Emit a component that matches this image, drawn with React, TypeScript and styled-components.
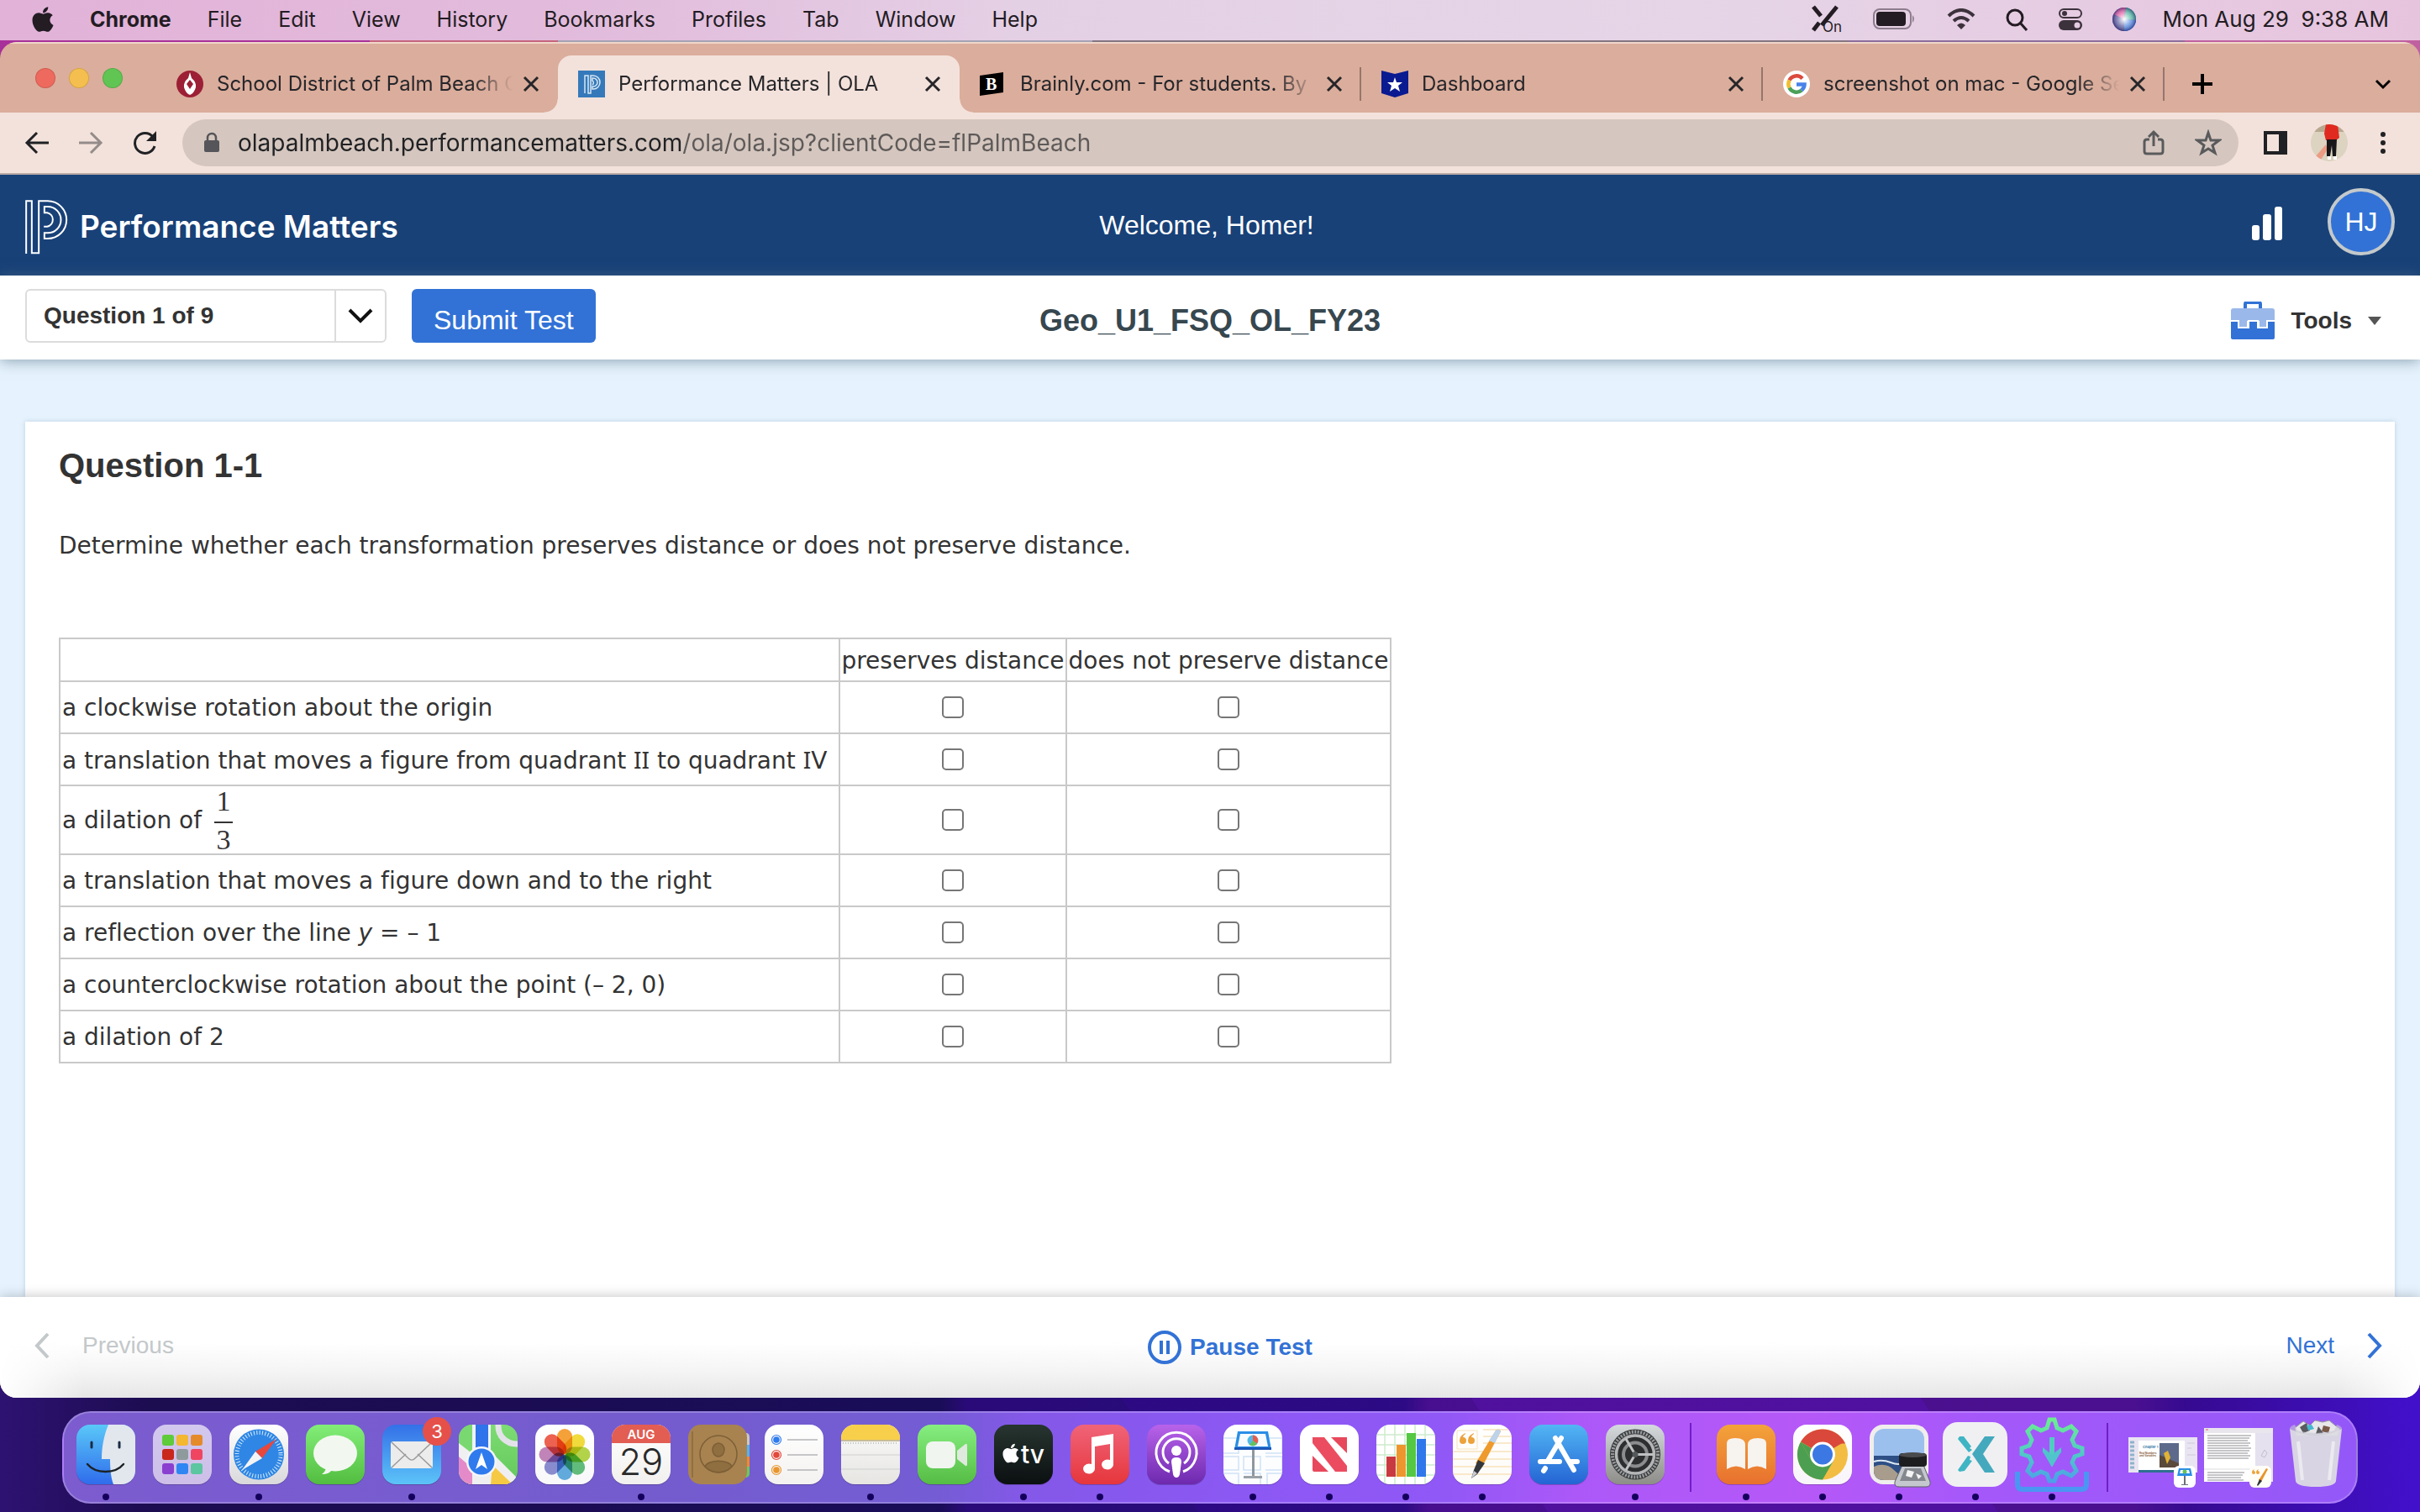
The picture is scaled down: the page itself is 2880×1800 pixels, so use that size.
import React, { useState } from "react";
import styled, { createGlobalStyle, css } from "styled-components";
import { FaApple } from "react-icons/fa";

const ui = `Inter, "Liberation Sans", sans-serif`;
const arial = `"Liberation Sans", Arial, sans-serif`;
const verdana = `"DejaVu Sans", Verdana, sans-serif`;
const blue = "#3272d6";

const GlobalStyle = createGlobalStyle`
  *, *::before, *::after { box-sizing: border-box; }
  body { margin: 0; background: #2a0d80; }
  button { border: 0; padding: 0; margin: 0; background: none; color: inherit; font: inherit; cursor: pointer; }
  svg { display: block; flex: none; }
`;

const Desktop = styled.div`
  min-height: 100vh;
  display: flex;
  flex-direction: column;
  background:
    linear-gradient(90deg, #a8309a 0 440px, #c4647c 440px 664px, #a4a2b4 664px 1300px, #847480 1300px 2200px, #8c6c9c 2200px 2600px, #c060a0 2600px) top / 100% 90px no-repeat,
    linear-gradient(56deg, transparent 0 48%, #3d08a833 48% 62%, #5c12c455 62% 80%, transparent 80%) bottom / 100% 136px no-repeat,
    linear-gradient(90deg, #2e1272 0, #1c0c50 180px, #1a0d58 1120px, #2a0a78 1150px, #280b7c 1670px, #4a108a 1700px, #4a1090 2540px, #360a90 2600px, #4210cc 100%);
`;

/* ---------- menu bar ---------- */
const MenuBar = styled.header`
  height: 48px;
  display: flex;
  align-items: center;
  justify-content: space-between;
  padding: 0 37px 2px 38px;
  background: linear-gradient(90deg, #e2b2d8 0, #e2bcdc 25%, #e4d0e5 42%, #e5d5e7 70%, #e7c4de 100%);
  font: 400 25px/46px ${ui};
  color: #231c23;
`;
const Menus = styled.nav`
  display: flex;
  align-items: center;
  gap: 43px;
`;
const AppleMenu = styled.button`
  width: 26px;
  display: flex;
  justify-content: center;
`;
const MenuItem = styled.button<{ $app?: boolean }>`
  font-weight: ${(p) => (p.$app ? 700 : 400)};
`;
const Status = styled.div`
  display: flex;
  align-items: center;
  gap: 36px;
`;
const Clock = styled.time`
  margin-left: -4px;
  font-size: 26px;
  white-space: pre;
`;

/* ---------- browser ---------- */
const Browser = styled.div`
  flex: 1;
  display: flex;
  flex-direction: column;
  margin-top: 2px;
  border-radius: 20px;
  overflow: hidden;
  background: #dbad9c;
`;
const TabStrip = styled.div`
  height: 84px;
  display: flex;
  align-items: flex-end;
  padding-right: 32px;
  border-top: 2px solid #f0d6ca;
`;
const Lights = styled.div`
  display: flex;
  gap: 16px;
  padding: 0 40px 29px 42px;
`;
const Light = styled.button<{ $c: string }>`
  width: 24px;
  height: 24px;
  border-radius: 50%;
  background: ${(p) => p.$c};
  box-shadow: inset 0 0 0 1px #0002;
`;
const Tabs = styled.div`
  flex: 1;
  display: flex;
`;
const flare = css`
  content: "";
  position: absolute;
  bottom: 0;
  width: 16px;
  height: 16px;
`;
const Tab = styled.div<{ $active?: boolean; $divided?: boolean }>`
  position: relative;
  flex: 0 1 478px;
  min-width: 0;
  height: 68px;
  display: flex;
  align-items: center;
  padding: 0 22px 0 24px;
  font: 400 24px/68px ${ui};
  color: #26262a;
  ${(p) =>
    p.$active &&
    css`
      background: #f3e2db;
      border-radius: 16px 16px 0 0;
      &::before { ${flare} left: -16px; background: radial-gradient(circle at 0 0, #dbad9c 15px, #f3e2db 16px); }
      &::after { ${flare} right: -16px; background: radial-gradient(circle at 100% 0, #dbad9c 15px, #f3e2db 16px); }
    `}
  ${(p) =>
    p.$divided &&
    css`
      &::after { content: ""; position: absolute; right: 0; top: 14px; width: 2px; height: 40px; background: #96766c; }
    `}
`;
const TabTitle = styled.button`
  flex: 1;
  min-width: 0;
  margin: 0 12px 0 16px;
  text-align: left;
  white-space: nowrap;
  overflow: hidden;
  mask-image: linear-gradient(90deg, #000 calc(100% - 48px), transparent);
`;
const StripButton = styled.button`
  height: 68px;
  display: flex;
  align-items: center;
`;
const AddressRow = styled.div`
  height: 74px;
  display: flex;
  align-items: center;
  background: #f3e2db;
  border-bottom: 2px solid #b9aaa6;
  padding: 0 30px 0 26px;
  color: #202124;
`;
const NavButtons = styled.div`
  display: flex;
  gap: 28px;
  margin-right: 27px;
`;
const Omnibox = styled.div`
  flex: 1;
  height: 56px;
  display: flex;
  align-items: center;
  gap: 20px;
  padding: 0 20px 0 24px;
  border-radius: 28px;
  background: #d5c7bf;
  color: #5a5a5c;
`;
const Url = styled.input`
  flex: 1;
  min-width: 0;
  height: 56px;
  border: 0;
  padding: 0;
  outline: 0;
  font: 400 28px/56px ${ui};
  color: transparent;
  background: linear-gradient(90deg, #202124 528px, #5e5a59 528px);
  -webkit-background-clip: text;
  background-clip: text;
`;
const BoxActions = styled.div`
  display: flex;
  gap: 34px;
`;
const Extras = styled.div`
  display: flex;
  align-items: center;
  gap: 28px;
  padding-left: 30px;
`;

/* ---------- Performance Matters ---------- */
const AppHeader = styled.header`
  height: 120px;
  display: grid;
  grid-template-columns: 1fr auto 1fr;
  align-items: center;
  padding: 0 30px;
  background: #184178;
  color: #fff;
`;
const Brand = styled.div`
  display: flex;
  align-items: center;
  gap: 14px;
  padding-top: 4px;
  font: 600 37px/44px ${ui};
`;
const Welcome = styled.div`
  margin-right: 8px;
  font: 400 32px/40px ${arial};
`;
const HeaderRight = styled.div`
  display: flex;
  justify-content: flex-end;
  align-items: center;
  gap: 54px;
  padding-bottom: 8px;
`;
const Progress = styled.button`
  padding-top: 4px;
`;
const Avatar = styled.button`
  width: 80px;
  height: 80px;
  border-radius: 50%;
  border: 4px solid #c4c9cb;
  background: ${blue};
  font: 400 32px/40px ${arial};
`;
const TestBar = styled.div`
  position: relative;
  z-index: 1;
  height: 100px;
  display: grid;
  grid-template-columns: 1fr auto 1fr;
  align-items: start;
  padding: 16px 30px 0;
  background: #fff;
  box-shadow: 0 2px 16px #5a7486a0;
`;
const BarLeft = styled.div`
  display: flex;
  gap: 30px;
`;
const Picker = styled.div`
  width: 430px;
  height: 64px;
  display: grid;
  grid-template-columns: 1fr 60px;
  align-items: center;
  border: 2px solid #dcdcdc;
  border-radius: 6px;
  & > * { grid-row: 1; }
`;
const PickerSelect = styled.select`
  grid-column: 1 / 3;
  height: 60px;
  appearance: none;
  border: 0;
  background: none;
  padding: 0 20px;
  font: 700 28px/60px ${arial};
  color: #333;
`;
const PickerArrow = styled.span`
  grid-column: 2;
  height: 60px;
  display: flex;
  align-items: center;
  justify-content: center;
  border-left: 2px solid #dcdcdc;
  pointer-events: none;
`;
const Submit = styled.button`
  height: 64px;
  padding: 10px 26px 0;
  border-radius: 6px;
  background: ${blue};
  color: #fff;
  font: 400 32px/54px ${arial};
`;
const TestTitle = styled.h1`
  margin: 0;
  font: 700 36px/76px ${arial};
  color: #37474f;
`;
const Tools = styled.button`
  justify-self: end;
  display: flex;
  align-items: center;
  gap: 19px;
  padding-right: 16px;
  font: 700 28px/76px ${arial};
  color: #333;
`;
const Content = styled.main`
  flex: 1;
  display: flex;
  padding: 74px 30px 0;
  background: #e6f3fe;
`;
const Card = styled.section`
  flex: 1;
  padding: 28px 40px 40px;
  background: #fff;
  box-shadow: 0 0 6px #4a6a8a40;
  color: #333;
  font: 400 28px/36px ${verdana};
  font-variant-ligatures: none;
`;
const CardTitle = styled.h2`
  margin: 0;
  font: 700 40px/48px ${arial};
`;
const Prompt = styled.p`
  margin: 54px 0 91px;
`;
const Matrix = styled.table`
  border-collapse: collapse;
`;
const Row = styled.tr<{ $h: number }>`
  height: ${(p) => p.$h}px;
`;
const cell = css`
  border: 2px solid #c9c9c9;
  font-weight: 400;
  white-space: nowrap;
`;
const Head = styled.th<{ $w: number }>`
  ${cell}
  padding: 2px 1px 0;
  min-width: ${(p) => p.$w}px;
`;
const Label = styled.th`
  ${cell}
  padding: 2px 2px 0;
  text-align: left;
`;
const Choice = styled.td`
  ${cell}
  padding: 0;
  text-align: center;
`;
const Check = styled.input`
  appearance: none;
  display: block;
  width: 26px;
  height: 26px;
  margin: 0 auto;
  border: 2px solid #767676;
  border-radius: 5px;
  background: #fff;
  &:checked { background: ${blue}; }
`;
const Roman = styled.span`
  font-family: "Noto Sans", ${verdana};
`;
const WithFraction = styled.span`
  display: flex;
  align-items: center;
  gap: 15px;
`;
const Fraction = styled.span`
  display: flex;
  flex-direction: column;
  align-items: center;
  width: 22px;
  font: 400 34px/32px "Liberation Serif", "Times New Roman", serif;
`;
const Over = styled.span`
  width: 22px;
  padding-bottom: 8px;
  margin-bottom: 4px;
  border-bottom: 2px solid #333;
  text-align: center;
`;
const Footer = styled.footer`
  position: relative;
  height: 120px;
  display: grid;
  grid-template-columns: 1fr auto 1fr;
  align-items: center;
  padding: 0 44px 4px 40px;
  background:
    linear-gradient(90deg, #fff, #fff0 100px, #fff0 calc(100% - 100px), #fff),
    linear-gradient(#fff 45%, #f4f4f4 75%, #e6e6e6);
  box-shadow: 0 0 14px #00000040;
`;
const Step = styled.button<{ $end?: boolean }>`
  justify-self: ${(p) => (p.$end ? "end" : "start")};
  display: flex;
  align-items: center;
  gap: 38px;
  font: 400 28px/36px ${arial};
  color: ${blue};
  &:disabled { color: #c3c8ca; }
`;
const Pause = styled.button`
  display: flex;
  align-items: center;
  gap: 10px;
  padding: 4px 0 0 52px;
  font: 700 28px/40px ${arial};
  color: ${blue};
`;

/* ---------- dock ---------- */
const DockArea = styled.div`
  display: flex;
  justify-content: center;
  padding: 16px 0 10px;
`;
const Dock = styled.nav`
  height: 110px;
  display: flex;
  align-items: flex-start;
  gap: 21px;
  padding: 14px 13px 0 15px;
  border: 2px solid #ffffff3a;
  border-radius: 34px;
  background: linear-gradient(90deg, #7c5ccf 0, #785cd0 12%, #745cce 24%, #745cd4 38%, #8458e8 42%, #8c58f4 52%, #9058f6 60%, #ac58f8 66%, #b658f8 76%, #a458fa 84%, #9458f8 100%);
`;
const DockItem = styled.button<{ $open?: boolean }>`
  position: relative;
  width: 70px;
  height: 71px;
  ${(p) =>
    p.$open &&
    css`
      &::after {
        content: "";
        position: absolute;
        left: 31px;
        top: 82px;
        width: 8px;
        height: 8px;
        border-radius: 50%;
        background: #14005c;
      }
    `}
`;
const Badge = styled.span`
  position: absolute;
  right: -12px;
  top: -9px;
  width: 34px;
  height: 34px;
  border-radius: 50%;
  background: #e5504a;
  color: #fff;
  font: 400 22px/34px ${ui};
  text-align: center;
`;
const DockRule = styled.span`
  width: 2px;
  height: 82px;
  margin: -2px 9px 0;
  background: #7020c8;
`;
const Art = styled.svg`
  width: 70px;
  height: 71px;
  overflow: visible;
`;

type TileProps = { id: string; from: string; to: string; children?: React.ReactNode };
const Tile = ({ id, from, to, children }: TileProps) => (
  <Art viewBox="0 0 70 71">
    <defs>
      <linearGradient id={id} x1="0" y1="0" x2="0" y2="1">
        <stop offset="0" stopColor={from} />
        <stop offset="1" stopColor={to} />
      </linearGradient>
      <clipPath id={id + "-clip"}>
        <rect width="70" height="71" rx="16" />
      </clipPath>
    </defs>
    <rect y="1" width="70" height="71" rx="16" fill="#0003" />
    <g clipPath={`url(#${id}-clip)`}>
      <rect width="70" height="71" fill={`url(#${id})`} />
      {children}
    </g>
  </Art>
);

const Finder = () => (
  <Tile id="finder" from="#5ac8f8" to="#2f6cec">
    <path d="M38 0C33 12 30 26 30 41h10c0 12 1 22 4 30h26V0z" fill="#e2e7ee" />
    <path d="M18 21v6M51 21v6" stroke="#1b2a44" strokeWidth="3" strokeLinecap="round" />
    <path d="M13 47c10 12 33 12 43 0" fill="none" stroke="#1b2226" strokeWidth="2.4" strokeLinecap="round" />
  </Tile>
);
const padColors = ["#5ecb3a", "#f3b730", "#e58a2a", "#c9261c", "#8f9a9c", "#ef4560", "#8a3fd0", "#2f86f2", "#5cc6a0"];
const Launchpad = () => (
  <Tile id="pad" from="#d2c8ee" to="#cdbfe8">
    {padColors.map((c, i) => (
      <rect key={c} x={11 + (i % 3) * 17} y={12 + Math.floor(i / 3) * 17} width="14" height="13" rx="3" fill={c} />
    ))}
  </Tile>
);
const Safari = () => (
  <Tile id="safari" from="#ffffff" to="#d9d9dc">
    <circle cx="35" cy="35.500" r="30" fill="#2f86e4" />
    <circle cx="35" cy="35.500" r="26" fill="none" stroke="#d6ecfb" strokeWidth="5" strokeDasharray="1 2.400" />
    <path d="M56 17L39 40l-8-8z" fill="#e8473c" />
    <path d="M15 54l24-14-8-8z" fill="#f4f4f6" />
  </Tile>
);
const Messages = () => (
  <Tile id="msg" from="#82ee78" to="#52bd40">
    <ellipse cx="35" cy="34" rx="26" ry="21.500" fill="#f2f8f0" />
    <path d="M24 50c0 4-2 7-5 9 6 0 10-2 12-5z" fill="#f2f8f0" />
  </Tile>
);
const Mail = () => (
  <Tile id="mail" from="#3470e8" to="#5cc4f8">
    <rect x="10" y="20" width="50" height="32" rx="3" fill="#ececec" />
    <path d="M11 51l17-16M59 51L42 35M11 21l20 19c3 3 5 3 8 0l20-19" fill="none" stroke="#9a9a9a" strokeWidth="1.500" />
  </Tile>
);
const Maps = () => (
  <Tile id="maps" from="#7ddc74" to="#63c85a">
    <path d="M0 0h17v44L0 26z" fill="#79d970" />
    <path d="M0 22l18 14v35H0z" fill="#f0f0f2" />
    <path d="M0 38l16 14v19H0z" fill="#e48ac8" />
    <path d="M38 32l32 32v7H18V50z" fill="#efeff1" />
    <path d="M40 48l24 23H38z" fill="#f6c944" />
    <path d="M16 0h22v60H16z" fill="#eef2f8" />
    <path d="M20 0h15v40H20z" fill="#2f74ea" />
    <circle cx="68" cy="2" r="21" fill="none" stroke="#e2e3e8" strokeWidth="7" />
    <circle cx="27" cy="44" r="18" fill="#f4f6fa" />
    <circle cx="27" cy="44" r="15.500" fill="#2f7bee" />
    <path d="M27 33l7 20-7-5-7 5z" fill="#fff" />
  </Tile>
);
const petals = ["#f6a23a", "#f3dc3c", "#b5d64a", "#63bf7c", "#64aee0", "#8c8ed2", "#c486ba", "#ee6250"];
const Photos = () => (
  <Tile id="photos" from="#ffffff" to="#f8f8fa">
    {petals.map((c, i) => (
      <rect
        key={c}
        x="26"
        y="5"
        width="18"
        height="30"
        rx="9"
        fill={c}
        style={{ mixBlendMode: "multiply" }}
        transform={`rotate(${i * 45} 35 35.500)`}
      />
    ))}
  </Tile>
);
const Calendar = () => (
  <Tile id="cal" from="#ffffff" to="#f1f0ee">
    <rect width="70" height="22" fill="#e25d52" />
    <text x="35" y="17" textAnchor="middle" fontFamily={ui} fontSize="15" fontWeight="600" fill="#fff">AUG</text>
    <text x="35" y="60" textAnchor="middle" fontFamily={ui} fontSize="43" fontWeight="300" fill="#2a2a2a">29</text>
  </Tile>
);
const Contacts = () => (
  <Art viewBox="0 0 70 71">
    <path d="M60 10h10q3 1 3 5v10H60z" fill="#c9c9c4" />
    <path d="M60 24h13v14H60z" fill="#54b4ea" />
    <path d="M60 38h13v12H60z" fill="#f08a2c" />
    <path d="M60 50h13v8q0 4-4 5h-9z" fill="#6cc95c" />
    <rect width="70" height="71" rx="15" fill="#a88350" />
    <path d="M5 8v55" stroke="#8a693c" strokeWidth="1.500" />
    <g fill="none" stroke="#7d5f36" strokeWidth="1.500">
      <circle cx="36" cy="35" r="22" />
      <ellipse cx="36" cy="30" rx="7" ry="8" fill="#8f6e40" />
      <path d="M20 50c3-9 29-9 32 0-9 9-23 9-32 0z" fill="#8f6e40" />
    </g>
  </Art>
);
const Reminders = () => (
  <Tile id="rem" from="#ffffff" to="#f4f2f0">
    {["#2f7bee", "#e2483c", "#e8962e"].map((c, i) => (
      <g key={c}>
        <circle cx="14" cy={18 + i * 18} r="5.500" fill="none" stroke={c} strokeWidth="1.200" />
        <circle cx="14" cy={18 + i * 18} r="3.800" fill={c} />
        <path d={`M27 ${18 + i * 18}h36`} stroke="#b4b4b8" strokeWidth="1.500" />
      </g>
    ))}
  </Tile>
);
const Notes = () => (
  <Tile id="notes" from="#fafafa" to="#e6e5e2">
    <rect width="70" height="18" fill="#f8cf4a" />
    <path d="M0 19h70" stroke="#b8a878" strokeWidth="1.500" />
    <path d="M2 22h66" stroke="#b4b4b4" strokeWidth="1.500" strokeDasharray="1 2" />
    <path d="M0 36h70M0 53h70" stroke="#cfcfcf" strokeWidth="1.200" />
  </Tile>
);
const FaceTime = () => (
  <Tile id="ft" from="#86ee80" to="#55bd44">
    <rect x="10" y="20" width="35" height="32" rx="8" fill="#f0f5ef" />
    <path d="M47 31l10-8q2-1 2 2v22q0 3-2 2l-10-8z" fill="#dfe9dd" />
  </Tile>
);
const AppleTv = () => (
  <Tile id="atv" from="#27352f" to="#0b0f11">
    <FaApple x="7" y="21" size={26} color="#fff" />
    <text x="32" y="46" fontFamily={ui} fontSize="30" fontWeight="500" fill="#fff">tv</text>
  </Tile>
);
const Music = () => (
  <Tile id="music" from="#f06478" to="#e6363c">
    <path d="M25 15l26-4v37a7 6 0 1 1-4-6V23l-18 3v27a7 6 0 1 1-4-6z" fill="#fff" />
  </Tile>
);
const Podcasts = () => (
  <Tile id="pod" from="#b863ea" to="#6d29ae">
    <g fill="none" stroke="#fff" strokeWidth="3">
      <path d="M27 56a24 24 0 1 1 16 0" />
      <path d="M26 46a16 16 0 1 1 18 0" />
    </g>
    <circle cx="35" cy="31" r="6" fill="#fff" />
    <path d="M29 44q0-5 6-5t6 5l-2 15q-1 4-4 4t-4-4z" fill="#fff" />
  </Tile>
);
const Keynote = () => (
  <Tile id="key" from="#ffffff" to="#fbfcff">
    <path d="M0 16h18v18H0M0 38h18v16H0M24 38h20v16H24zM50 38h20v16H50M50 16h20v18H50M24 58h20v14H24M0 58h18v14M52 72V58h18" fill="none" stroke="#cfe2f6" strokeWidth="1.500" />
    <path d="M34 28h3v34h-3z" fill="#8f979e" />
    <path d="M24 61h22v3H24z" fill="#9aa2a8" />
    <path d="M17 8h36l4 22H13z" fill="#2a8ee6" />
    <path d="M20 11h30l3 15H17z" fill="#f6fbff" />
    <path d="M13 27h44v3H13z" fill="#1c57b8" />
    <circle cx="35" cy="19" r="6.500" fill="#52b8e8" />
    <path d="M35 19v-6.500a6.500 6.500 0 0 1 5 10z" fill="#ee5a48" />
    <path d="M35 19l5 4a6.500 6.500 0 0 1-9 1z" fill="#63c35a" />
  </Tile>
);
const News = () => (
  <Tile id="news" from="#ffffff" to="#ffffff">
    <path d="M15 15h14l27 34v7H42L15 22z" fill="#ec4c60" />
    <path d="M37 15h19v19zM15 37l19 19H17q-2 0-2-2z" fill="#e8485c" />
  </Tile>
);
const Numbers = () => (
  <Tile id="num" from="#ffffff" to="#ffffff">
    <path d="M0 12h70M0 24h70M0 36h70M0 48h70M0 60h70M10 0v71M22 0v71M34 0v71M46 0v71M58 0v71" stroke="#cdeccb" strokeWidth="1.500" />
    <rect x="12" y="38" width="11" height="24" fill="#c93a40" />
    <rect x="24" y="24" width="11" height="38" fill="#ee962e" />
    <rect x="36" y="10" width="11" height="52" fill="#55c843" />
    <rect x="48" y="17" width="11" height="45" fill="#2f78ec" />
  </Tile>
);
const Pages = () => (
  <Tile id="pages" from="#ffffff" to="#fdfbf7">
    <path d="M36 6h34M36 14h34M36 22h34M0 32h70M0 41h70M0 50h70M0 59h70" stroke="#f8e2bc" strokeWidth="1.500" />
    <path d="M5 7h24v22H5z" fill="none" stroke="#f8e2bc" />
    <path d="M15 10q-7 3-7 9a4 4 0 1 0 4-4q0-2 3-4zM25 10q-7 3-7 9a4 4 0 1 0 4-4q0-2 3-4z" fill="#eda23c" />
    <path d="M51 7q4-3 6 1L35 50l-8-4z" fill="#ee9a2c" />
    <path d="M51 7q4-3 6 1l-7 14-7-3z" fill="#bcd3ea" />
    <path d="M30 42l8 4-9 13-7 5 3-10z" fill="#33363a" />
    <path d="M22 64l3-9 4 3z" fill="#c8ccd2" />
  </Tile>
);
const AppStore = () => (
  <Tile id="store" from="#52b6f4" to="#2464d4">
    <g stroke="#fff" strokeWidth="6" strokeLinecap="round">
      <path d="M38 16L22 43M31 16l22 38M13 44h23M48 44h9M19 52l-2 3" />
    </g>
  </Tile>
);
const Settings = () => (
  <Tile id="sys" from="#d5dade" to="#8d8d88">
    <circle cx="35" cy="35.500" r="30" fill="#37393a" />
    <circle cx="35" cy="35.500" r="27" fill="none" stroke="#9a9d9f" strokeWidth="4" strokeDasharray="2 1.500" />
    <circle cx="35" cy="35.500" r="22.500" fill="#2c2e2f" stroke="#b4b6b8" strokeWidth="3.500" />
    <circle cx="35" cy="35.500" r="14" fill="none" stroke="#8a8c8d" strokeWidth="4" />
    <path d="M35 35.500h22M35 35.500L24 17M35 35.500L24 54" stroke="#bfc1c2" strokeWidth="3" />
    <circle cx="35" cy="35.500" r="3.500" fill="#55585a" />
  </Tile>
);
const Books = () => (
  <Tile id="books" from="#f3a33a" to="#e8702e">
    <path d="M12 53V22q0-6 10-6 12 0 12 8v29q-11-7-22 0zM59 53V22q0-6-10-6-12 0-12 8v29q11-7 22 0z" fill="#f7f3ef" />
  </Tile>
);
const ChromeIcon = () => (
  <Tile id="chrome" from="#ffffff" to="#f8f4fa">
    <circle cx="35" cy="35.500" r="30" fill="#f2bd42" />
    <path d="M35 35.500L9 20.500a30 30 0 0 1 52 0z" fill="#d9483b" />
    <path d="M35 20.500h26a30 30 0 0 1 1 2H35z" fill="#d9483b" />
    <path d="M9 20.500a30 30 0 0 0 26 45l13-22.500-26 0z" fill="#4c9f50" />
    <path d="M9 20.500L22 43l13-7z" fill="#4c9f50" />
    <circle cx="35" cy="35.500" r="15" fill="#fff" />
    <circle cx="35" cy="35.500" r="12" fill="#3b78e4" />
  </Tile>
);
const Preview = () => (
  <Art viewBox="0 0 70 71">
    <rect width="70" height="71" rx="16" fill="#f0eeec" />
    <rect x="5" y="5" width="60" height="61" rx="12" fill="#9cc0ee" />
    <path d="M5 37h60v17q0 12-12 12H17Q5 66 5 54z" fill="#2d4f86" />
    <path d="M5 50q14-6 24 4t18 12H17Q5 66 5 54z" fill="#a89c8c" />
    <path d="M5 44q10-3 20 1t16 0" fill="none" stroke="#dce8f4" strokeWidth="2" />
    <path d="M39 48h25l8 20q1 6-5 6H35q-6 0-5-6z" fill="#c4c8ce" stroke="#5c5e64" />
    <path d="M42 52h19l6 15H36z" fill="#84888e" />
    <path d="M45 54l8 2-3 7-7-2zM55 58l7 3-4 4z" fill="#f4f4f4" />
    <rect x="35" y="34" width="33" height="16" rx="4" fill="#1d1d1f" />
    <ellipse cx="51.500" cy="36" rx="16" ry="3" fill="#4a4a4c" />
  </Art>
);
const XApp = () => (
  <Art viewBox="0 0 70 71">
    <rect x="-4" y="-3" width="77" height="77" rx="18" fill="#f0f0f2" />
    <path d="M58 14H46L31 35l15 22h12L44 35z" fill="#45a9bd" />
    <path d="M16 14l5 0 9 12-2 2 3 2-4 3-13-16zM16 56l6-1 9-12-3-1 1-4-3-1-12 17z" fill="#3fb5c4" />
  </Art>
);
const GearDownload = () => (
  <Art viewBox="0 0 70 71">
    <defs>
      <linearGradient id="dl" gradientUnits="userSpaceOnUse" x1="0" y1="-8" x2="0" y2="80">
        <stop offset="0" stopColor="#6cf08c" />
        <stop offset=".5" stopColor="#50c8c8" />
        <stop offset="1" stopColor="#4a90f6" />
      </linearGradient>
    </defs>
    <path
      d="M32 -6h6l3 10 7 3 10-5 6 6-5 10 3 7 9 3v7l-9 3-3 7 5 10-6 6-10-5-7 3-3 8h-6l-3-8-7-3-10 5-6-6 5-10-3-7-9-3v-7l9-3 3-7-5-10 6-6 10 5 7-3z"
      fill="none"
      stroke="url(#dl)"
      strokeWidth="5"
      strokeLinejoin="miter"
    />
    <path d="M35 15v23" stroke="#50cdc0" strokeWidth="6" />
    <path d="M24 27l11 9 11-9v6L35 43 24 33z" fill="#50c4cc" />
    <path d="M24 31l11 12 11-12-11 19z" fill="#50c4cc" stroke="#50c4cc" strokeLinejoin="round" />
    <path d="M-6 56v15q0 6 6 6h70q6 0 6-6V56" fill="none" stroke="#4a96f2" strokeWidth="6" />
  </Art>
);
const lines = (x: number, y: number, w: number, n: number, gap: number) =>
  Array.from({ length: n }, (_, i) => `M${x} ${y + i * gap}h${w - ((i * 7) % 5)}`).join("");
const KeynoteWindow = () => (
  <Art viewBox="0 0 70 71">
    <rect x="-6" y="15" width="82" height="42" fill="#e9e4f2" />
    <rect x="6" y="19" width="55" height="36" fill="#fff" />
    <path d="M-4 21h5M-4 26h5M-4 31h5M-4 36h5M-4 41h5M-4 46h5M-4 51h5" stroke="#8fb2c8" strokeWidth="3" />
    <rect x="6" y="54" width="55" height="3" fill="#2f6f90" />
    <rect x="31" y="22" width="23" height="29" fill="#5d6a8c" />
    <path d="M31 36l23 10v5H31z" fill="#5a4a3c" />
    <path d="M36 34l5-3 3 8-4 8z" fill="#e2b234" />
    <text x="11" y="28" fontFamily={ui} fontSize="4" fontWeight="700" fill="#3a7ca8">Chapter 1</text>
    <text x="7" y="35" fontFamily={ui} fontSize="3" fontWeight="700" fill="#8a6040">Real Numbers</text>
    <text x="7" y="38" fontFamily={ui} fontSize="3" fontWeight="700" fill="#8a6040">and Variables</text>
    <path d="M64 22h9M64 28h5M64 36h10" stroke="#cfc8da" />
    <rect x="48" y="49" width="26" height="26" rx="6" fill="#fff" />
    <path d="M54 52h14l2 9H52z" fill="#2a8ee6" />
    <path d="M56 54h10l1 4H55z" fill="#f6fbff" />
    <circle cx="61" cy="56" r="2.500" fill="#63c35a" />
    <path d="M60 61h2v10h-2zM57 71h8v1h-8z" fill="#6a7078" />
  </Art>
);
const PagesWindow = () => (
  <Art viewBox="0 0 70 71">
    <rect x="-7" y="4" width="82" height="64" fill="#fff" />
    <rect x="-7" y="4" width="82" height="6" fill="#e9e6ee" />
    <rect x="54" y="10" width="21" height="58" fill="#e6e1ee" />
    <path d="M-5 6h3" stroke="#e2605a" />
    <path d={lines(-3, 13, 52, 10, 3)} stroke="#8c8c92" />
    <path d="M-7 53h61" stroke="#dcdce0" />
    <path d={lines(-3, 57, 44, 4, 3)} stroke="#8c8c92" />
    <path d="M61 37l4-7 3 4-3 5z" fill="none" stroke="#c4bfcc" />
    <rect x="47" y="49" width="26" height="26" rx="6" fill="#fffdf8" />
    <path d="M53 53q-3 1-3 4a2 2 0 1 0 2-2zM58 53q-3 1-3 4a2 2 0 1 0 2-2z" fill="#eda23c" />
    <path d="M67 52l2 1-8 15-3-2z" fill="#e8942c" />
    <path d="M59 65l3 2-5 6-1-1z" fill="#2f3236" />
  </Art>
);
const Trash = () => (
  <Art viewBox="0 0 70 71">
    <path d="M10 4l10-8 8 5 6-6 9 2 8-2 7 6 6 4-4 8H12z" fill="#e8e8ea" stroke="#9a9aa0" />
    <path d="M16 3l8-5 4 9-8 3zM38 2l6 8-9 1z" fill="#5a5a60" />
    <path d="M24 1l6-1 3 5-7 2z" fill="#45b8d0" />
    <path d="M44 1l8 2-2 7-8-2z" fill="#7a5a48" />
    <path d="M4 5q31 14 62 0l-7 62q-1 7-24 7t-24-7z" fill="#dddce2" opacity=".94" />
    <path d="M4 5q0-3 6-5l3 7q22 6 44 0l3-7q6 2 6 5-31 16-62 0z" fill="#c8c6d6" opacity=".6" />
    <path d="M14 20l5 46M56 20l-5 46" stroke="#f4f4f6" strokeWidth="4" opacity=".7" />
  </Art>
);

type App = { name: string; art: React.ReactNode; open?: boolean; badge?: number };
const apps: App[] = [
  { name: "Finder", art: <Finder />, open: true },
  { name: "Launchpad", art: <Launchpad /> },
  { name: "Safari", art: <Safari />, open: true },
  { name: "Messages", art: <Messages /> },
  { name: "Mail", art: <Mail />, open: true, badge: 3 },
  { name: "Maps", art: <Maps /> },
  { name: "Photos", art: <Photos /> },
  { name: "Calendar", art: <Calendar />, open: true },
  { name: "Contacts", art: <Contacts /> },
  { name: "Reminders", art: <Reminders /> },
  { name: "Notes", art: <Notes />, open: true },
  { name: "FaceTime", art: <FaceTime /> },
  { name: "TV", art: <AppleTv />, open: true },
  { name: "Music", art: <Music />, open: true },
  { name: "Podcasts", art: <Podcasts /> },
  { name: "Keynote", art: <Keynote />, open: true },
  { name: "News", art: <News />, open: true },
  { name: "Numbers", art: <Numbers />, open: true },
  { name: "Pages", art: <Pages />, open: true },
  { name: "App Store", art: <AppStore /> },
  { name: "System Preferences", art: <Settings />, open: true },
];
const recents: App[] = [
  { name: "Books", art: <Books />, open: true },
  { name: "Chrome", art: <ChromeIcon />, open: true },
  { name: "Preview", art: <Preview />, open: true },
  { name: "X", art: <XApp />, open: true },
  { name: "Installer", art: <GearDownload />, open: true },
];
const shelf: App[] = [
  { name: "Keynote window", art: <KeynoteWindow /> },
  { name: "Pages window", art: <PagesWindow /> },
  { name: "Trash", art: <Trash /> },
];
const DockApps = ({ items }: { items: App[] }) => (
  <>
    {items.map((a) => (
      <DockItem key={a.name} aria-label={a.name} $open={a.open}>
        {a.art}
        {a.badge && <Badge>{a.badge}</Badge>}
      </DockItem>
    ))}
  </>
);

/* ---------- small icons ---------- */
type StrokeProps = { w: number; h: number; d: string; sw?: number; color?: string };
const Stroke = ({ w, h, d, sw = 3, color = "currentColor" }: StrokeProps) => (
  <svg width={w} height={h} viewBox={`0 0 ${w} ${h}`} fill="none" stroke={color} strokeWidth={sw}>
    <path d={d} />
  </svg>
);
const Close = () => <Stroke w={20} h={20} d="M2 2l16 16M18 2L2 18" />;

const FavSchool = () => (
  <svg width="32" height="32" viewBox="0 0 32 32">
    <circle cx="16" cy="16" r="16" fill="#9c1f35" />
    <path d="M16 2l2 7q6 5 5 11-2 7-7 9-5-2-7-9-1-6 5-11z" fill="#fff" />
    <path d="M16 11l4 5-4 6-4-6z" fill="#9c1f35" />
  </svg>
);
const FavPM = () => (
  <svg width="32" height="32" viewBox="0 0 32 32" fill="none" stroke="#d6e6f4" strokeWidth="1.500">
    <path d="M0 0h32v32H0z" fill="#3579ba" stroke="none" />
    <path d="M8 27V6h4v21h3V6h3a8 8 0 0 1 0 16h-1v-3h1a5 5 0 0 0 0-10h-1v3a3 3 0 0 1 0 5" />
  </svg>
);
const FavBrainly = () => (
  <svg width="32" height="32" viewBox="0 0 32 32">
    <path d="M0 6l28-4v24L0 30z" fill="#000" />
    <text x="7" y="23" fontFamily={`"Liberation Serif", serif`} fontSize="20" fontWeight="700" fill="#fff">B</text>
  </svg>
);
const FavDashboard = () => (
  <svg width="32" height="32" viewBox="0 0 32 32">
    <path d="M0 0l16 4 16-4v27l-16 5-16-5z" fill="#0a1a90" />
    <path d="M16 8l2 6h7l-5 4 2 7-6-4-6 4 2-7-5-4h7z" fill="#fff" />
  </svg>
);
const FavGoogle = () => (
  <svg width="32" height="32" viewBox="0 0 32 32" fill="none" strokeWidth="4.500">
    <circle cx="16" cy="16" r="16" fill="#fff" />
    <path d="M23 9.500a9.500 9.500 0 0 0-15.500 2" stroke="#dc4a3e" />
    <path d="M7.500 11.500a9.500 9.500 0 0 0 0 9" stroke="#f2bd2e" />
    <path d="M7.500 20.500a9.500 9.500 0 0 0 14.500 3" stroke="#4ba05a" />
    <path d="M22 23.500q3.500-3 3.500-7H16" stroke="#4a82ea" />
  </svg>
);

const Profile = () => (
  <svg width="44" height="44" viewBox="0 0 44 44">
    <defs>
      <clipPath id="profile"><circle cx="22" cy="22" r="22" /></clipPath>
    </defs>
    <g clipPath="url(#profile)">
      <path d="M0 0h44v44H0z" fill="#dcd3c0" />
      <path d="M0 0h44v9H0z" fill="#b8a890" />
      <path d="M18 24L6 38l6 4 8-12z" fill="#ec9c84" />
      <path d="M18 0h14l2 16-4 3H18l-2-8z" fill="#e02a20" />
      <path d="M19 18h12l-1 20h-4l-1-13-2 13h-4z" fill="#17171a" />
      <path d="M20 38h4v4h-4zM27 38h4v4h-4z" fill="#fff" />
    </g>
  </svg>
);

const SystemStatus = () => (
  <Status>
    <svg width="38" height="42" viewBox="0 -4 38 42">
      <path d="M3 2l9 11M31 2L13 24" stroke="#231c23" strokeWidth="5" />
      <path d="M3 30l7-9" stroke="#231c23" strokeWidth="5" />
      <text x="14" y="32" fontFamily={ui} fontSize="17" fill="#231c23">On</text>
    </svg>
    <svg width="52" height="26" viewBox="0 0 52 26">
      <rect x="1" y="1" width="44" height="23" rx="7" fill="none" stroke="#8c7c8c" strokeWidth="2" />
      <rect x="4" y="4" width="35" height="17" rx="4" fill="#231c23" />
      <path d="M47 8q4 4 0 9z" fill="#8c7c8c" />
    </svg>
    <svg width="34" height="26" viewBox="0 0 34 26" fill="none" stroke="#3c323c" strokeWidth="4">
      <path d="M2 9q15-14 30 0M8 15q9-8 18 0" />
      <path d="M17 25l-5-5q5-5 10 0z" fill="#3c323c" stroke="none" />
    </svg>
    <svg width="27" height="27" viewBox="0 0 27 27" fill="none" stroke="#231c23" strokeWidth="3">
      <circle cx="11" cy="11" r="9" />
      <path d="M17 17l8 9" />
    </svg>
    <svg width="28" height="28" viewBox="0 0 28 28">
      <rect x="1" y="2" width="26" height="10" rx="5" fill="none" stroke="#3c323c" strokeWidth="2" />
      <circle cx="7" cy="7" r="3" fill="#3c323c" />
      <rect y="15" width="28" height="12" rx="6" fill="#3c323c" />
      <circle cx="22" cy="21" r="3.500" fill="#e6cce0" />
    </svg>
    <svg width="28" height="28" viewBox="0 0 28 28">
      <defs>
        <radialGradient id="siri">
          <stop offset="0" stopColor="#fff" />
          <stop offset=".6" stopColor="#fff" stopOpacity=".35" />
          <stop offset="1" stopColor="#2a2060" stopOpacity=".5" />
        </radialGradient>
      </defs>
      <circle cx="14" cy="14" r="14" fill="#4a4a94" />
      <path d="M14 14L2 8a14 14 0 0 1 14-8z" fill="#d84a98" />
      <path d="M14 14l2-14a14 14 0 0 1 12 15z" fill="#3cae98" />
      <path d="M14 14l14 1a14 14 0 0 1-14 13z" fill="#3a78d8" />
      <circle cx="14" cy="14" r="14" fill="url(#siri)" />
    </svg>
    <Clock>Mon Aug 29  9:38 AM</Clock>
  </Status>
);

const Toolbox = () => (
  <svg width="52" height="46" viewBox="0 0 52 46">
    <path d="M17 9V3q0-2 2-2h14q2 0 2 2v6" fill="none" stroke={blue} strokeWidth="4" />
    <path d="M0 11q0-3 3-3h46q3 0 3 3v12H0z" fill="#9ab8ea" />
    <path d="M0 24h8v8h13v-8h11v8h12v-8h8v19q0 2-2 2H2q-2 0-2-2z" fill={blue} />
    <path d="M10 22h9v8h-9zM34 22h8v8h-8z" fill="#9ab8ea" />
    <path d="M0 23h9v8h12v-8h11v8h11v-8h9" fill="none" stroke="#fff" strokeWidth="2" />
  </svg>
);

const tabs = [
  { title: "School District of Palm Beach C", icon: <FavSchool /> },
  { title: "Performance Matters | OLA", icon: <FavPM />, active: true },
  { title: "Brainly.com - For students. By", icon: <FavBrainly />, divided: true },
  { title: "Dashboard", icon: <FavDashboard />, divided: true },
  { title: "screenshot on mac - Google Se", icon: <FavGoogle />, divided: true },
];

const columns = ["preserves distance", "does not preserve distance"];
const rows: { id: string; label: React.ReactNode; tall?: boolean }[] = [
  { id: "cw", label: "a clockwise rotation about the origin" },
  {
    id: "quad",
    label: (
      <>
        a translation that moves a figure from quadrant <Roman>II</Roman> to quadrant <Roman>I</Roman>V
      </>
    ),
  },
  {
    id: "third",
    tall: true,
    label: (
      <WithFraction>
        a dilation of
        <Fraction>
          <Over>1</Over>
          <span>3</span>
        </Fraction>
      </WithFraction>
    ),
  },
  { id: "down", label: "a translation that moves a figure down and to the right" },
  { id: "refl", label: <>a reflection over the line <i>y</i> = – 1</> },
  { id: "ccw", label: "a counterclockwise rotation about the point (– 2, 0)" },
  { id: "two", label: "a dilation of 2" },
];

export default function App() {
  const [checked, setChecked] = useState<Record<string, boolean>>({});
  return (
    <Desktop>
      <GlobalStyle />
      <MenuBar>
        <Menus>
          <AppleMenu aria-label="Apple menu">
            <FaApple size={34} />
          </AppleMenu>
          <MenuItem $app>Chrome</MenuItem>
          {["File", "Edit", "View", "History", "Bookmarks", "Profiles", "Tab", "Window", "Help"].map((m) => (
            <MenuItem key={m}>{m}</MenuItem>
          ))}
        </Menus>
        <SystemStatus />
      </MenuBar>

      <Browser>
        <TabStrip>
          <Lights>
            <Light $c="#ee6a5e" aria-label="Close window" />
            <Light $c="#f5bf4f" aria-label="Minimize" />
            <Light $c="#61c554" aria-label="Zoom" />
          </Lights>
          <Tabs>
            {tabs.map((t) => (
              <Tab key={t.title} $active={t.active} $divided={t.divided}>
                {t.icon}
                <TabTitle>{t.title}</TabTitle>
                <StripButton aria-label={`Close ${t.title}`}>
                  <Close />
                </StripButton>
              </Tab>
            ))}
            <StripButton aria-label="New tab">
              <Stroke w={90} h={26} sw={4} d="M45 1v24M33 13h24" />
            </StripButton>
          </Tabs>
          <StripButton aria-label="Search tabs">
            <Stroke w={24} h={20} d="M4 6l8 8 8-8" />
          </StripButton>
        </TabStrip>

        <AddressRow>
          <NavButtons>
            <button aria-label="Back">
              <Stroke w={36} h={30} d="M32 15H6M18 3L6 15l12 12" />
            </button>
            <button aria-label="Forward">
              <Stroke w={36} h={30} color="#948c8a" d="M4 15h26M18 3l12 12-12 12" />
            </button>
            <button aria-label="Reload">
              <svg width="36" height="30" viewBox="0 0 36 30">
                <path d="M28 8a12 12 0 1 0 2 11" fill="none" stroke="#202124" strokeWidth="3" />
                <path d="M32 1v12H20z" fill="#202124" />
              </svg>
            </button>
          </NavButtons>
          <Omnibox>
            <svg width="22" height="26" viewBox="0 0 22 26">
              <path d="M6 11V7a5 5 0 0 1 10 0v4" fill="none" stroke="#55555a" strokeWidth="2.500" />
              <rect x="2" y="10" width="18" height="14" rx="2" fill="#55555a" />
            </svg>
            <Url aria-label="Address" defaultValue="olapalmbeach.performancematters.com/ola/ola.jsp?clientCode=flPalmBeach" />
            <BoxActions>
              <button aria-label="Share">
                <Stroke w={30} h={32} d="M10 12H7q-3 0-3 3v11q0 3 3 3h16q3 0 3-3V15q0-3-3-3h-3M15 20V4M9 9l6-6 6 6" />
              </button>
              <button aria-label="Bookmark">
                <Stroke w={32} h={32} d="M16 4l3 9 10 0-8 6 3 9-8-5-8 5 3-9-8-6h10z" />
              </button>
            </BoxActions>
          </Omnibox>
          <Extras>
            <button aria-label="Side panel">
              <svg width="28" height="28" viewBox="0 0 28 28">
                <path d="M0 0h28v28H0zM4 4v20h14V4z" fill="#202124" fillRule="evenodd" />
              </svg>
            </button>
            <button aria-label="Profile">
              <Profile />
            </button>
            <button aria-label="Menu">
              <svg width="28" height="28" viewBox="0 0 28 28" fill="#202124">
                <circle cx="14" cy="4" r="3" />
                <circle cx="14" cy="14" r="3" />
                <circle cx="14" cy="24" r="3" />
              </svg>
            </button>
          </Extras>
        </AddressRow>

        <AppHeader>
          <Brand>
            <svg width="51" height="65" viewBox="30 38 152 195" fill="none" stroke="#fff" strokeWidth="6">
              <path d="M33 230V42H53V228H78V42H110A67 67 0 0 1 110 176H98V156H110A47 47 0 0 0 110 62H98V84H108A25 25 0 0 1 108 133H96" />
            </svg>
            Performance Matters
          </Brand>
          <Welcome>Welcome, Homer!</Welcome>
          <HeaderRight>
            <Progress aria-label="Progress">
              <svg width="36" height="40" viewBox="0 0 36 40" fill="#fff">
                <rect y="22" width="9" height="18" rx="3" />
                <rect x="13" y="9" width="10" height="31" rx="3" />
                <rect x="27" width="9" height="40" rx="3" />
              </svg>
            </Progress>
            <Avatar>HJ</Avatar>
          </HeaderRight>
        </AppHeader>

        <TestBar>
          <BarLeft>
            <Picker>
              <PickerSelect aria-label="Question">
                <option>Question 1 of 9</option>
              </PickerSelect>
              <PickerArrow>
                <Stroke w={32} h={24} sw={4} color="#111" d="M3 5l13 13L29 5" />
              </PickerArrow>
            </Picker>
            <Submit>Submit Test</Submit>
          </BarLeft>
          <TestTitle>Geo_U1_FSQ_OL_FY23</TestTitle>
          <Tools>
            <Toolbox />
            Tools
            <svg width="16" height="10" viewBox="0 0 16 10">
              <path d="M0 0h16l-8 10z" fill="#555" />
            </svg>
          </Tools>
        </TestBar>

        <Content>
          <Card>
            <CardTitle>Question 1-1</CardTitle>
            <Prompt>Determine whether each transformation preserves distance or does not preserve distance.</Prompt>
            <Matrix>
              <thead>
                <Row $h={51}>
                  <Head $w={928} />
                  <Head $w={270} scope="col">{columns[0]}</Head>
                  <Head $w={386} scope="col">{columns[1]}</Head>
                </Row>
              </thead>
              <tbody>
                {rows.map((r) => (
                  <Row key={r.id} $h={r.tall ? 82 : 62}>
                    <Label scope="row" id={r.id}>{r.label}</Label>
                    {columns.map((c, i) => {
                      const key = `${r.id}-${i}`;
                      return (
                        <Choice key={c}>
                          <Check
                            type="checkbox"
                            aria-labelledby={r.id}
                            aria-description={c}
                            checked={!!checked[key]}
                            onChange={(e) => setChecked({ ...checked, [key]: e.target.checked })}
                          />
                        </Choice>
                      );
                    })}
                  </Row>
                ))}
              </tbody>
            </Matrix>
          </Card>
        </Content>

        <Footer>
          <Step disabled>
            <Stroke w={20} h={32} sw={4} d="M17 2L4 16l13 14" />
            Previous
          </Step>
          <Pause>
            <svg width="40" height="40" viewBox="0 0 40 40" fill="none" stroke={blue}>
              <circle cx="20" cy="20" r="18" strokeWidth="4" />
              <path d="M16 12v16M24 12v16" strokeWidth="4" />
            </svg>
            Pause Test
          </Pause>
          <Step $end>
            Next
            <Stroke w={20} h={32} sw={4} d="M3 2l13 14L3 30" />
          </Step>
        </Footer>
      </Browser>

      <DockArea>
        <Dock aria-label="Dock">
          <DockApps items={apps} />
          <DockRule />
          <DockApps items={recents} />
          <DockRule />
          <DockApps items={shelf} />
        </Dock>
      </DockArea>
    </Desktop>
  );
}
